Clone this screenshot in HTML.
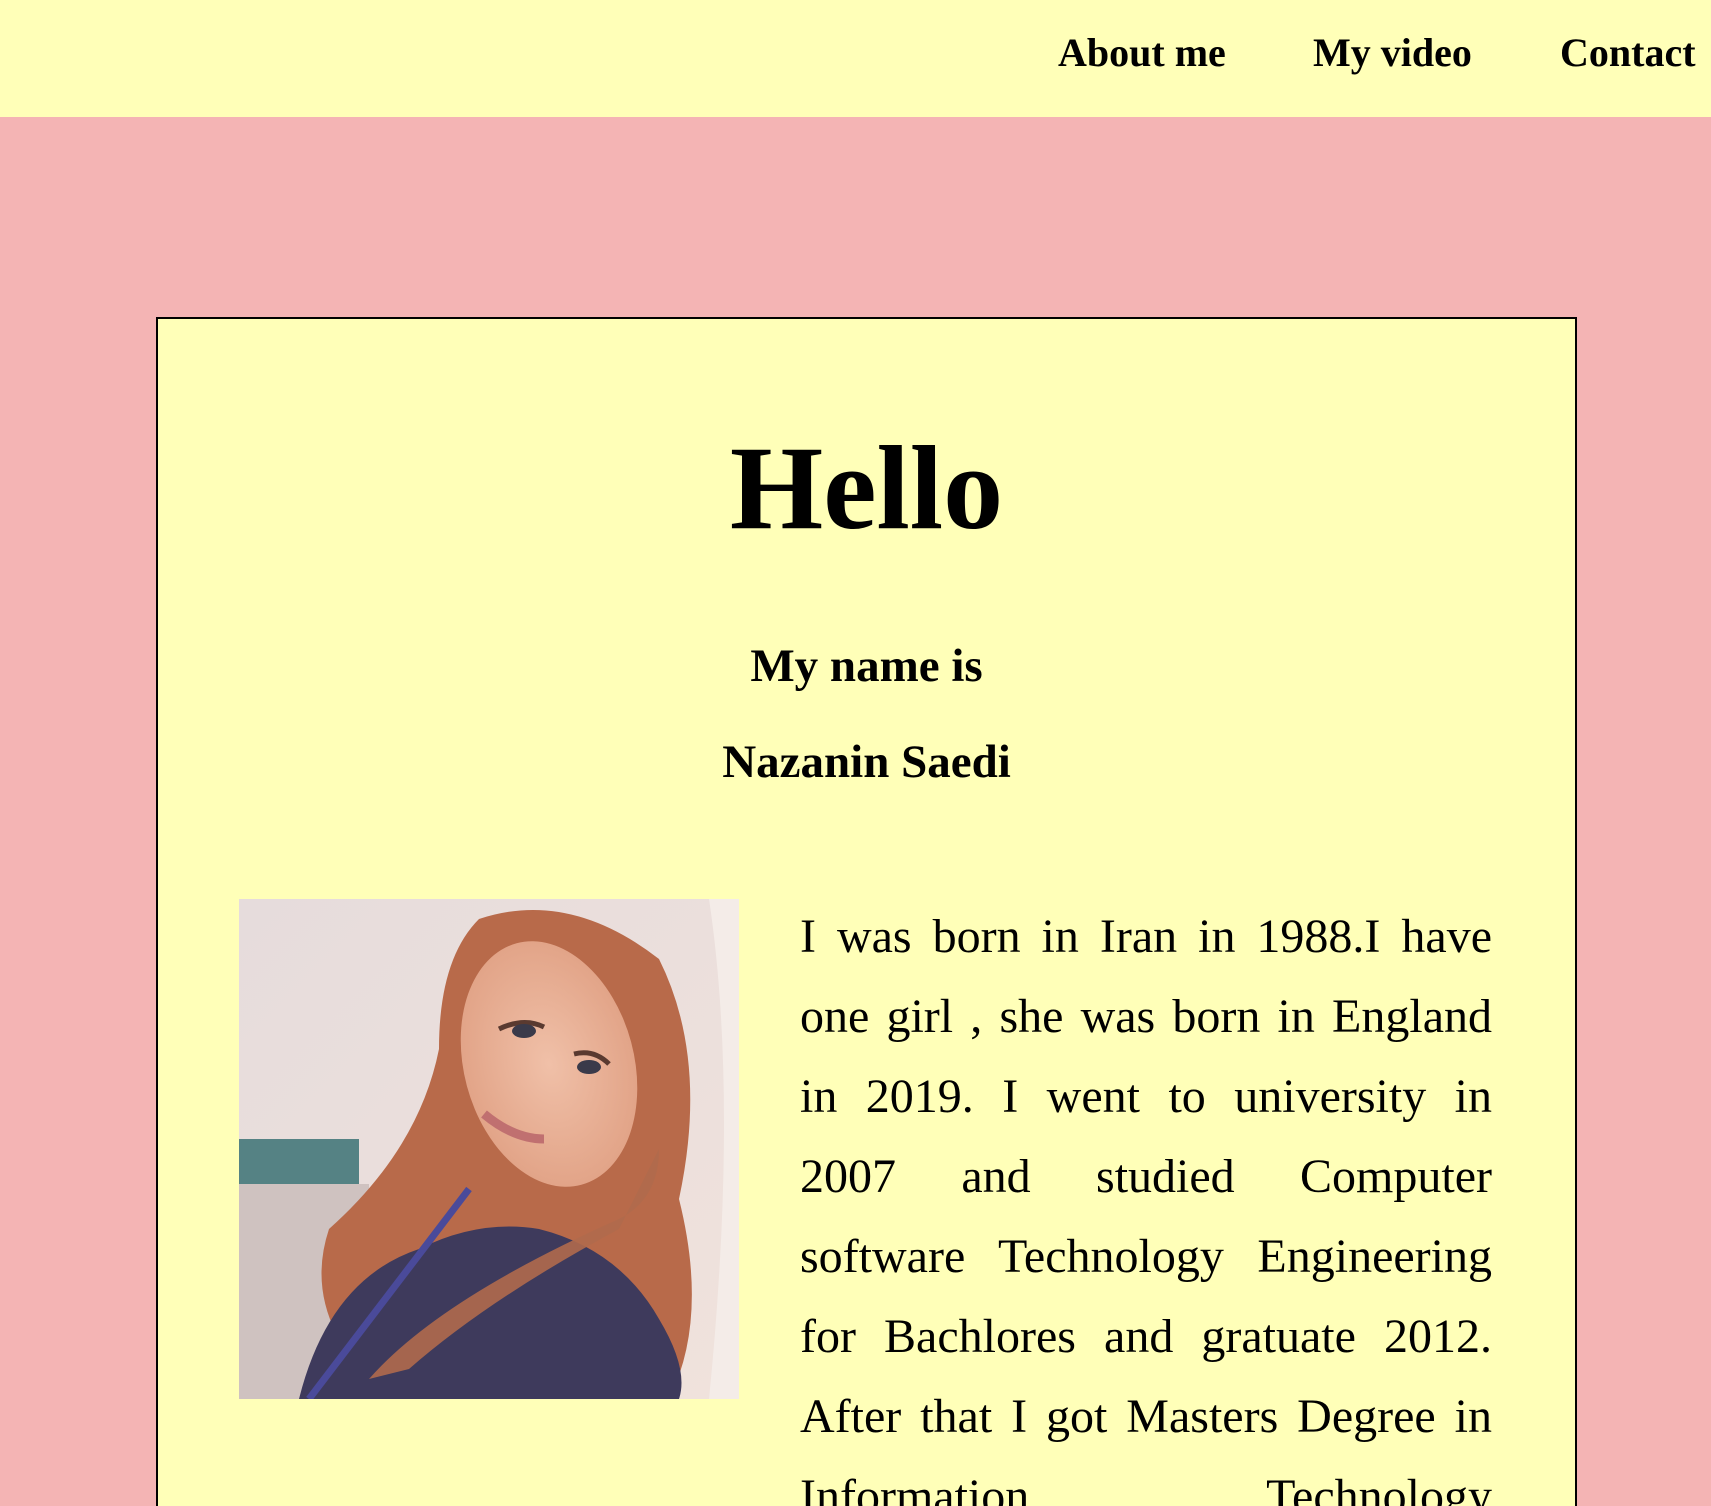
<!DOCTYPE html>
<html><head><meta charset="utf-8"><style>
html,body{margin:0;padding:0;width:1711px;height:1506px;overflow:hidden;background:#f4b4b4;font-family:"Liberation Serif","Times New Roman",serif;color:#000}
.wrap{position:relative;width:1711px;height:1506px;overflow:hidden}
.hdr{position:absolute;left:0;top:0;width:1711px;height:117px;background:#ffffb8}
.nav{position:absolute;top:28px;font-weight:bold;font-size:40px;line-height:50px;white-space:nowrap}
.card{position:absolute;left:156px;top:317px;width:1417px;height:1250px;border:2px solid #000;background:#ffffb8}
.c{position:absolute;left:0;width:100%;text-align:center;font-weight:bold;white-space:nowrap}
.p{position:absolute;left:800px;top:0;width:692px;font-size:48px}
.p div{height:80px;line-height:80px;text-align:justify;text-align-last:justify;white-space:nowrap;position:absolute;left:0;width:692px}
</style></head><body><div class="wrap">
<div class="hdr"></div>
<div class="nav" style="left:1058px">About me</div>
<div class="nav" style="left:1313px">My video</div>
<div class="nav" style="left:1560px">Contact</div>
<div class="card"></div>
<div class="c" style="left:156px;width:1421px;top:418px;font-size:120px;line-height:140px">Hello</div>
<div class="c" style="left:156px;width:1421px;top:638px;font-size:47px;line-height:56px">My name is</div>
<div class="c" style="left:156px;width:1421px;top:734px;font-size:47px;line-height:56px">Nazanin Saedi</div>
<svg style="position:absolute;left:239px;top:899px" width="500" height="500" viewBox="0 0 500 500">
<defs><linearGradient id="bg" x1="0" y1="0" x2="1" y2="1"><stop offset="0" stop-color="#e6dcdc"/><stop offset="1" stop-color="#f0e2dc"/></linearGradient>
<radialGradient id="face" cx="0.5" cy="0.5" r="0.5"><stop offset="0" stop-color="#f0c0a8"/><stop offset="1" stop-color="#e2a488"/></radialGradient></defs>
<rect width="500" height="500" fill="url(#bg)"/>
<rect x="0" y="240" width="120" height="50" fill="#2f6a6e" opacity="0.8"/>
<rect x="0" y="285" width="130" height="215" fill="#cfc2c0"/>
<path d="M470 0 Q500 200 470 500 L500 500 L500 0Z" fill="#f4ece8"/>
<path d="M240 20 Q330 -10 420 60 Q470 160 440 300 Q470 420 430 500 L150 500 Q60 420 90 330 Q180 250 200 150 Q200 60 240 20Z" fill="#b86a4a"/>
<ellipse cx="310" cy="165" rx="85" ry="125" fill="url(#face)" transform="rotate(-15 310 165)"/>
<path d="M260 130 Q285 118 305 128 M335 155 Q355 150 370 165" stroke="#5a3a30" stroke-width="5" fill="none"/>
<ellipse cx="285" cy="132" rx="12" ry="7" fill="#3a3a4a"/><ellipse cx="350" cy="168" rx="12" ry="7" fill="#3a3a4a"/>
<path d="M245 215 Q275 240 305 240" stroke="#c07070" stroke-width="9" fill="none"/>
<path d="M60 500 Q90 380 180 350 Q240 320 300 330 Q380 350 420 420 Q450 470 440 500Z" fill="#3e3a5c"/>
<path d="M70 500 L230 290" stroke="#4a4a9a" stroke-width="7"/>
<path d="M130 480 Q200 400 380 320 Q420 300 420 250 L380 330 Q250 400 170 470Z" fill="#b06a4c" opacity="0.9"/>
</svg>
<div class="p">
<div style="top:897px">I was born in Iran in 1988.I have</div>
<div style="top:977px">one girl , she was born in England</div>
<div style="top:1057px">in 2019. I went to university in</div>
<div style="top:1137px">2007 and studied Computer</div>
<div style="top:1217px">software Technology Engineering</div>
<div style="top:1297px">for Bachlores and gratuate 2012.</div>
<div style="top:1377px">After that I got Masters Degree in</div>
<div style="top:1457px">Information Technology</div>
</div>
</div></body></html>
